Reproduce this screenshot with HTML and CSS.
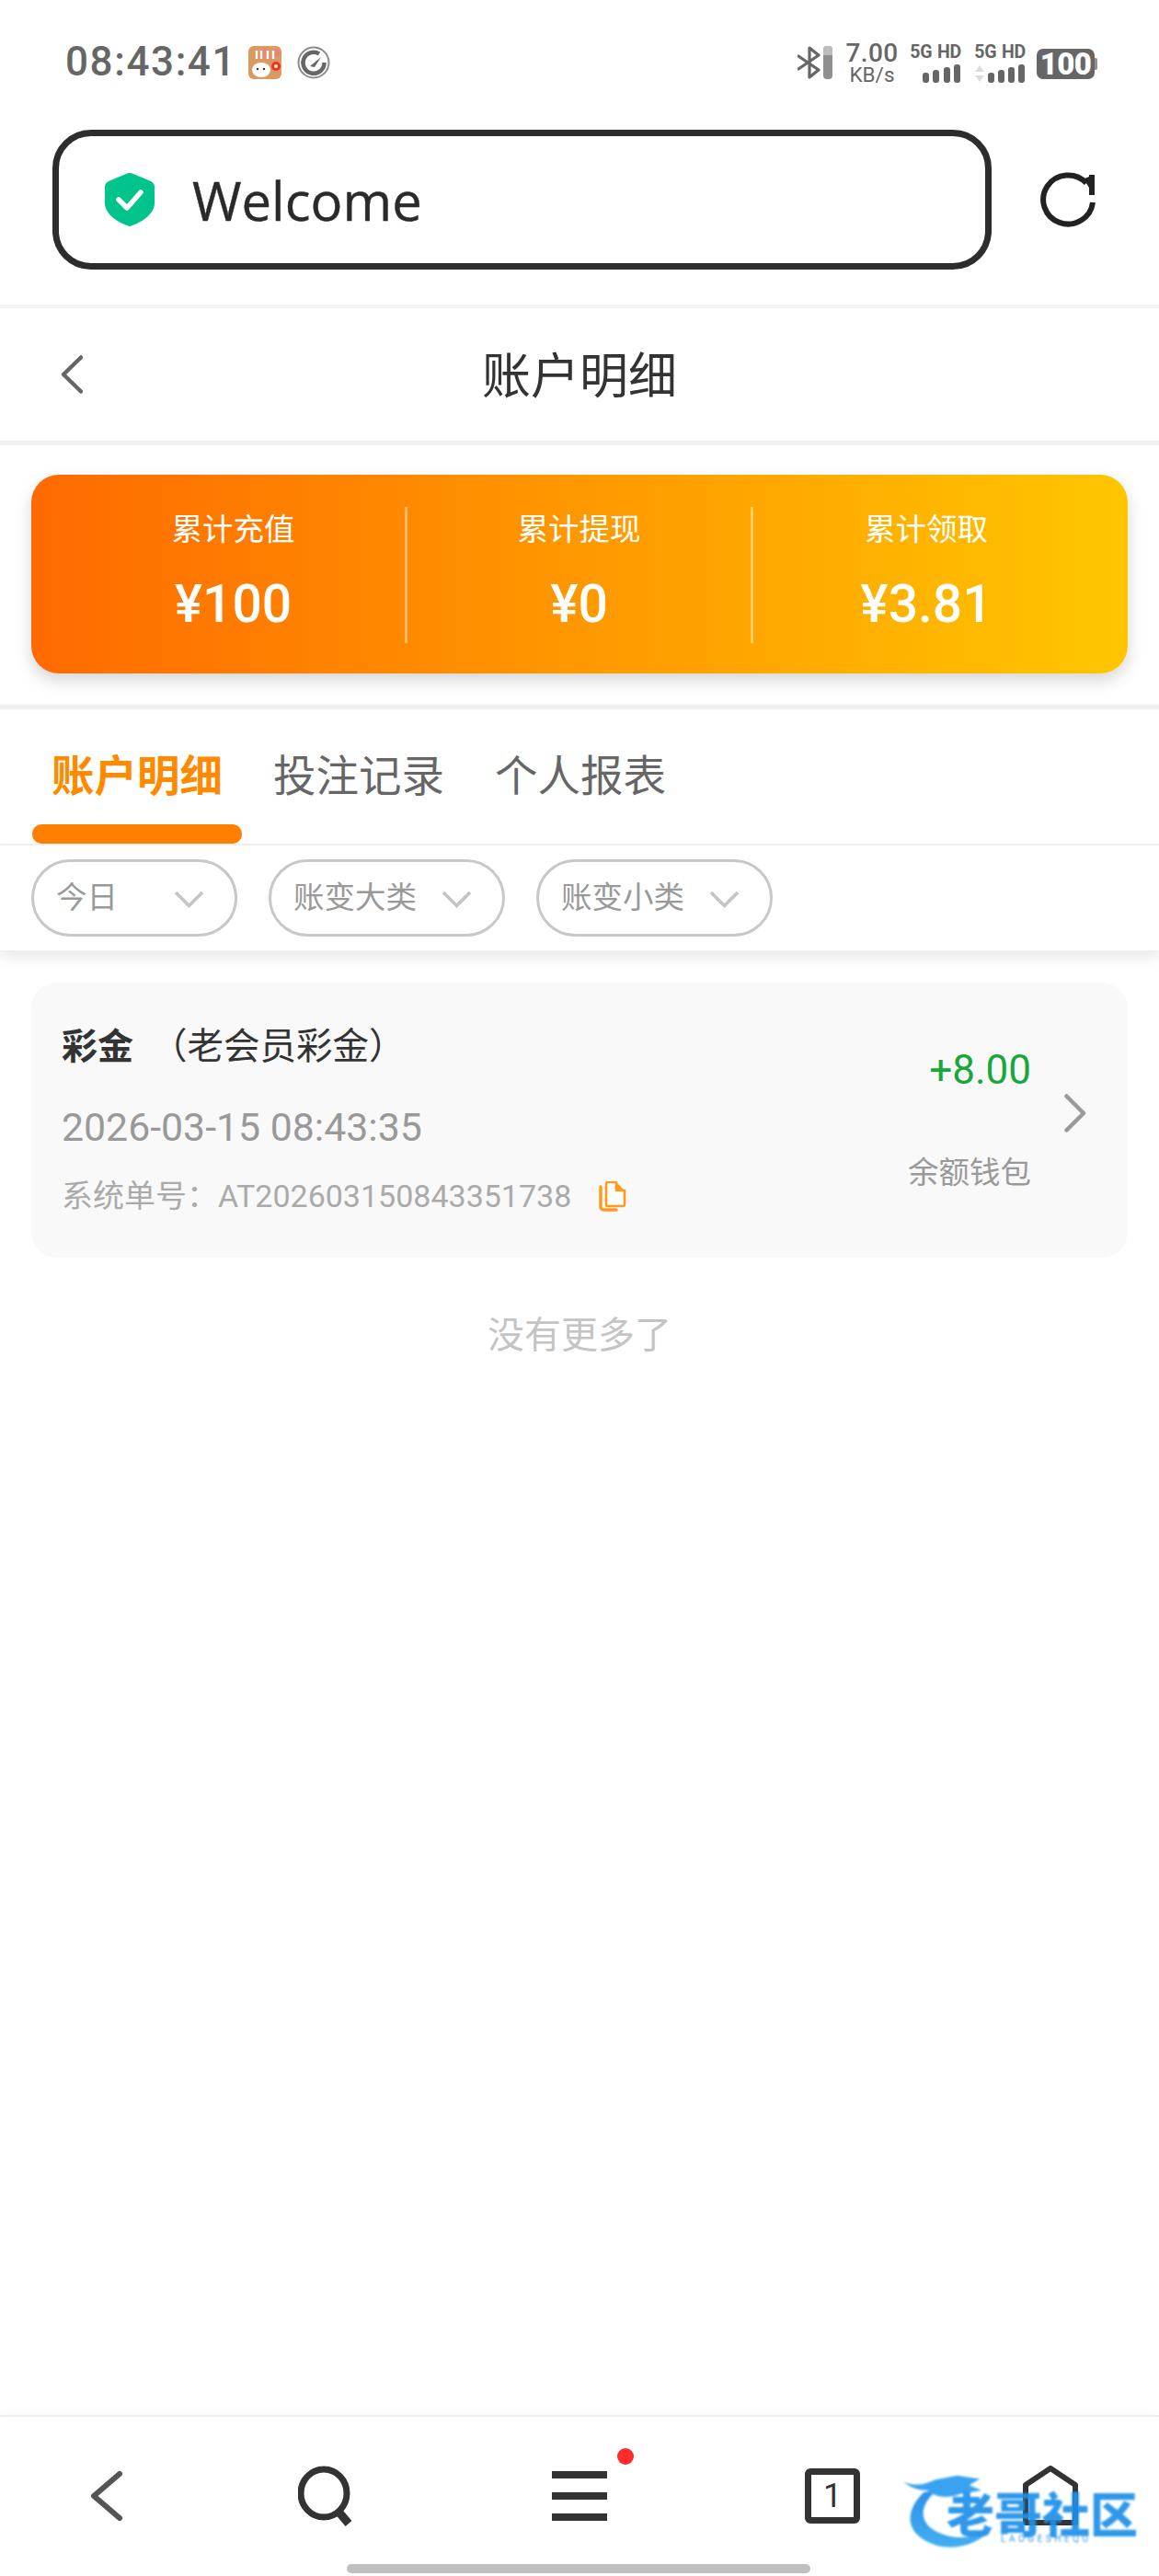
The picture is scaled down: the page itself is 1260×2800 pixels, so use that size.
FILE: index.html
```html
<!DOCTYPE html>
<html lang="zh-CN">
<head>
<meta charset="utf-8">
<title>账户明细</title>
<link rel="stylesheet" href="styles.css">
</head>
<body>
<div class="page">
  <div class="status">
    <span class="time">08:43:41</span>
    <svg class="st-icon st-jd" viewBox="0 0 36 36">
      <rect width="36" height="36" rx="6" fill="#dc9a63"/>
      <path d="M18 0L8 14h20zM30 0l-6 16 12-8z" fill="#ef7f7a" opacity=".6"/>
      <path d="M9 5v9M14 5v9M21 5v9M27 5v9" stroke="#fff" stroke-width="2.4"/>
      <ellipse cx="14" cy="26" rx="10" ry="8" fill="#fff"/>
      <circle cx="10" cy="25" r="1.2" fill="#333"/><circle cx="17" cy="25" r="1.2" fill="#333"/>
      <circle cx="30" cy="22" r="5" fill="#e8352a"/><circle cx="30" cy="22" r="2" fill="#fbe3b8"/>
    </svg>
    <svg class="st-icon st-gauge" viewBox="0 0 36 36" fill="none">
      <circle cx="18" cy="18" r="16.5" stroke="#8a8a8a" stroke-width="2"/>
      <path d="M24 8.500A11.500 11.500 0 1 0 29.500 18" stroke="#666" stroke-width="4.500"/>
      <path d="M14 22L26 12L19 23z" fill="#666"/>
    </svg>
    <div class="st-right">
      <svg class="st-bt" viewBox="0 0 38 36" fill="none">
        <path d="M1 11L23 26L13 34V2L23 10L1 25" stroke="#666" stroke-width="3.2" stroke-linejoin="round" stroke-linecap="round"/>
        <rect x="28" width="10" height="36" rx="4" fill="#8f8f8f"/>
        <path d="M28 4a4 4 0 0 1 4-4h2a4 4 0 0 1 4 4v6H28z" fill="#bdbdbd"/>
      </svg>
      <div class="st-speed"><span class="st-num">7.00</span><span class="st-unit">KB/s</span></div>
      <div class="st-sim">
        <span class="st-label">5G HD</span>
        <svg class="st-sig" viewBox="0 0 42 20"><rect y="9" width="7" height="11" rx="3" fill="#666"/><rect x="11" y="6" width="7" height="14" rx="3" fill="#666"/><rect x="23" y="3" width="7" height="17" rx="3" fill="#666"/><rect x="34" width="7" height="20" rx="3" fill="#666"/></svg>
      </div>
      <div class="st-sim">
        <span class="st-label">5G HD</span>
        <svg class="st-sig st-sig2" viewBox="0 0 56 20"><path d="M1 8L6 1l5 7zM1 12l5 7 5-7z" fill="#ddd"/><rect x="15" y="9" width="7" height="11" rx="3" fill="#666"/><rect x="26" y="6" width="7" height="14" rx="3" fill="#666"/><rect x="37" y="3" width="7" height="17" rx="3" fill="#666"/><rect x="48" width="7" height="20" rx="3" fill="#666"/></svg>
      </div>
      <div class="st-batt"><span class="st-batt-num">100</span></div>
    </div>
  </div>

  <div class="addr">
    <div class="addr-box">
      <svg class="shield" viewBox="0 0 54 58">
        <path d="M27 0Q29 0 31 1L50 9Q54 11 54 15V33C54 45 38 55 27 58C16 55 0 45 0 33V15Q0 11 4 9L23 1Q25 0 27 0Z" fill="#00c48c"/>
        <path d="M15 29L24 38L39 21" fill="none" stroke="#fff" stroke-width="5.5" stroke-linecap="round" stroke-linejoin="round"/>
      </svg>
      <span class="addr-text">Welcome</span>
    </div>
    <svg class="refresh" viewBox="0 0 60 60" fill="none">
      <path d="M57 33A27 26.500 0 1 1 50 12" stroke="#222" stroke-width="6"/>
      <path d="M53 3h6v22h-6z" fill="#222"/>
      <path d="M47 7.500L53 5v12z" fill="#222"/>
    </svg>
  </div>

  <div class="head">
    <svg class="head-back" viewBox="0 0 24 42" fill="none"><path d="M22 2.500L3 21l19 18.500" stroke="#666" stroke-width="4.500" stroke-linecap="round" stroke-linejoin="round"/></svg>
    <h1 class="head-title">账户明细</h1>
    <span></span>
  </div>

  <div class="summary">
    <div class="sum-card">
      <div class="sum-col"><span class="sum-label">累计充值</span><span class="sum-value">¥100</span></div>
      <div class="sum-col"><span class="sum-label">累计提现</span><span class="sum-value">¥0</span></div>
      <div class="sum-col"><span class="sum-label">累计领取</span><span class="sum-value">¥3.81</span></div>
    </div>
  </div>

  <div class="tabs">
    <div class="tab tab-on"><span class="tab-text">账户明细</span><span class="tab-bar"></span></div>
    <div class="tab"><span class="tab-text">投注记录</span></div>
    <div class="tab"><span class="tab-text">个人报表</span></div>
  </div>

  <div class="filters">
    <div class="pill pill-a"><span>今日</span><svg class="pill-arrow" viewBox="0 0 33 19" fill="none"><path d="M2 2l14.500 14.500L31 2" stroke="#c4c4c4" stroke-width="3.600"/></svg></div>
    <div class="pill pill-b"><span>账变大类</span><svg class="pill-arrow" viewBox="0 0 33 19" fill="none"><path d="M2 2l14.500 14.500L31 2" stroke="#c4c4c4" stroke-width="3.600"/></svg></div>
    <div class="pill pill-b"><span>账变小类</span><svg class="pill-arrow" viewBox="0 0 33 19" fill="none"><path d="M2 2l14.500 14.500L31 2" stroke="#c4c4c4" stroke-width="3.600"/></svg></div>
  </div>

  <div class="item">
    <div class="item-left">
      <div class="item-title"><b class="item-strong">彩金</b><span class="item-sub">（老会员彩金）</span></div>
      <div class="item-date">2026-03-15 08:43:35</div>
      <div class="item-sys">
        <span class="item-no">系统单号：AT202603150843351738</span>
        <svg class="copy" viewBox="0 0 31 33"><path d="M3 6v22a3 3 0 0 0 3 3h14" fill="none" stroke="#ff9a1f" stroke-width="3.400" stroke-linecap="round"/><path d="M9 3a2 2 0 0 1 2-2h9v9h9v15a2 2 0 0 1-2 2H11a2 2 0 0 1-2-2z" fill="#fff" stroke="#ff9a1f" stroke-width="2.600"/><path d="M19 0l11 11H19z" fill="#ff9a1f"/></svg>
      </div>
    </div>
    <div class="item-right">
      <div class="item-col"><span class="item-amount">+8.00</span><span class="item-wallet">余额钱包</span></div>
      <svg class="item-arrow" viewBox="0 0 24 42" fill="none"><path d="M2.500 2.500L21 21 2.500 39.500" stroke="#999" stroke-width="4.500" stroke-linecap="round" stroke-linejoin="round"/></svg>
    </div>
  </div>

  <div class="more">没有更多了</div>

  <div class="nav">
    <div class="nav-row">
      <div class="nav-slot nav-back"><svg class="nav-svg" viewBox="0 0 60 66" fill="none"><path d="M45 9L17 33l28 24" stroke="#555" stroke-width="6" stroke-linecap="round" stroke-linejoin="round"/></svg></div>
      <div class="nav-slot nav-search"><svg class="nav-svg" viewBox="0 0 60 66" fill="none"><ellipse cx="28" cy="30" rx="25" ry="26" stroke="#333" stroke-width="7"/><path d="M44 50l11 13" stroke="#333" stroke-width="9"/></svg></div>
      <div class="nav-slot nav-menu">
        <svg class="nav-svg" viewBox="0 0 60 66"><path d="M0 6h60v8H0zM0 29h60v8H0zM0 52h60v8H0z" fill="#333"/></svg>
        <span class="nav-dot"></span>
      </div>
      <div class="nav-slot nav-tabs"><span class="nav-count">1</span></div>
      <div class="nav-slot nav-home"><svg class="nav-svg" viewBox="0 0 60 66" fill="none"><path d="M3 62V21L30 3l27 18v41z" stroke="#333" stroke-width="6" stroke-linejoin="round"/></svg></div>
    </div>
    <div class="nav-ind"></div>
  </div>

  <div class="mark">
    <svg class="mark-dragon" viewBox="0 0 110 90" fill="none">
      <defs><linearGradient id="markfill" x1="0" y1="0" x2="0" y2="1"><stop offset="0" stop-color="#1c86e8"/><stop offset="1" stop-color="#33a9ef"/></linearGradient></defs>
      <path d="M24 22C4 40 -4 70 40 84C62 89 88 82 104 62C86 74 62 78 44 70C18 60 16 40 38 20z" fill="url(#markfill)"/>
      <path d="M0 10C14 16 26 13 36 8L62 3L88 7L76 14L90 20L66 24C52 30 36 28 28 20C18 20 8 17 0 10z" fill="#2a9cf0"/>
    </svg>
    <span class="mark-cn">老哥社区</span>
    <span class="mark-en">LAOGESHEQU</span>
  </div>
</div>
</body>
</html>
```

FILE: styles.css
```css
* { box-sizing: border-box; }
html, body { margin: 0; padding: 0; background: #fff; }
body { font-family: "Noto Sans CJK SC", "Noto Sans", sans-serif; }
.page { position: relative; width: 1260px; height: 2800px; overflow: hidden; display: flex; flex-direction: column; background: #fff; }

/* status bar */
.status { height: 139px; flex: none; display: flex; align-items: flex-start; padding: 45px 70px 0 71px; color: #666; font-family: Roboto, sans-serif; }
.time { font-size: 44px; line-height: 45px; font-weight: 500; letter-spacing: 1.6px; width: 199px; flex: none; }
.st-icon { width: 36px; height: 36px; flex: none; margin-top: 5px; }
.st-gauge { margin-left: 17px; }
.st-right { margin-left: auto; display: flex; align-items: flex-start; }
.st-bt { width: 38px; height: 36px; margin-top: 5px; flex: none; }
.st-speed { width: 54px; margin-left: 16px; display: flex; flex-direction: column; align-items: center; }
.st-num { font-size: 28px; line-height: 26px; font-weight: 500; letter-spacing: .4px; }
.st-unit { font-size: 22.500px; line-height: 21px; }
.st-sim { width: 58px; margin-left: 12px; display: flex; flex-direction: column; align-items: flex-end; }
.st-sim:first-of-type { margin-left: 15px; }
.st-label { font-size: 19.500px; line-height: 20px; font-weight: 700; white-space: nowrap; letter-spacing: -.2px; margin-top: 2px; word-spacing: 1px; }
.st-sig { width: 42px; height: 20px; margin-top: 3px; }
.st-sig2 { width: 56px; }
.st-batt { width: 63px; height: 33px; margin-left: 12px; margin-top: 8px; background: #666; border-radius: 7px; display: flex; align-items: center; justify-content: center; position: relative; }
.st-batt::after { content: ""; position: absolute; right: -3px; top: 10px; width: 3px; height: 13px; background: #8f8f8f; border-radius: 0 2px 2px 0; }
.st-batt-num { color: #fff; font-size: 33px; line-height: 33px; font-weight: 900; letter-spacing: -.6px; }

/* address bar */
.addr { height: 196px; flex: none; padding: 2px 70px 0 57px; display: flex; align-items: flex-start; border-bottom: 4px solid #f3f3f3; }
.addr-box { width: 1021px; height: 152px; border: 7px solid #2d2d2d; border-radius: 42px; display: flex; align-items: center; padding-left: 50px; flex: none; }
.shield { width: 54px; height: 58px; flex: none; }
.addr-text { margin: 2px 0 0 41px; font-family: "Open Sans", sans-serif; font-size: 58px; line-height: 70px; color: #2a2a2a; -webkit-text-stroke: .4px #2a2a2a; }
.refresh { width: 60px; height: 60px; margin: 46px 0 0 53px; flex: none; }

/* page head */
.head { height: 149px; flex: none; display: grid; grid-template-columns: 1fr auto 1fr; align-items: center; padding: 0 0 4px; border-bottom: 5px solid #f0f0f0; }
.head-back { width: 24px; height: 42px; margin: 4px 0 0 66px; }
.head-title { margin: 0; font-size: 53px; line-height: 70px; font-weight: 400; color: #333; }

/* summary */
.summary { height: 287px; flex: none; padding: 32px 34px 0; border-bottom: 5px solid #f0f0f0; }
.sum-card { height: 216px; padding: 35px 31px 35px 33px; display: grid; grid-template-columns: repeat(3, 1fr); border-radius: 30px; background: linear-gradient(90deg, #ff6a00, #ffc600); box-shadow: 0 8px 18px rgba(0, 0, 0, .16); }
.sum-col { height: 148px; display: flex; flex-direction: column; align-items: center; color: #fff; border-right: 3px solid rgba(255, 255, 255, .42); }
.sum-col:last-child { border-right: 0; }
.sum-label { font-size: 33.500px; line-height: 44px; }
.sum-value { margin-top: 27px; font-family: Roboto, sans-serif; font-size: 57px; line-height: 70px; font-weight: 500; }

/* tabs */
.tabs { height: 148px; flex: none; display: flex; align-items: flex-start; gap: 13px; padding-left: 35px; border-bottom: 2px solid #f0f0f0; }
.tab { display: flex; flex-direction: column; padding-top: 13px; }
.tab-text { font-size: 46.500px; line-height: 112px; padding: 0 21px; color: #666; }
.tab-on .tab-text { color: #ff8a00; font-weight: 700; }
.tab-bar { height: 21px; background: #ff8000; border-radius: 10px; }

/* filters */
.filters { height: 114px; flex: none; display: flex; gap: 34px; padding: 15px 0 0 34px; background: #fff; box-shadow: 0 8px 14px rgba(0, 0, 0, .09); position: relative; }
.pill { height: 84px; display: flex; align-items: center; padding: 0 0 7px 24px; border: 3px solid #c8c8c8; border-radius: 42px; font-size: 33.500px; color: #999; background: #fff; }
.pill-a { width: 224px; }
.pill-b { width: 257px; }
.pill-arrow { width: 33px; height: 19px; margin-left: auto; margin-right: 33px; margin-top: 9px; }

/* record */
.item { height: 299px; flex: none; margin: 35px 34px 0; padding: 45px 45px 0 33px; display: flex; justify-content: space-between; background: #f9f9f9; border-radius: 28px; }
.item-title { line-height: 48px; font-size: 39.500px; color: #333; white-space: nowrap; margin-top: -3px; }
.item-strong { font-weight: 700; font-size: 39px; }
.item-sub { font-weight: 400; margin-left: 19px; }
.item-date { margin-top: 41px; font-family: Roboto, sans-serif; font-size: 42.800px; line-height: 52px; color: #999; }
.item-sys { margin-top: 26px; display: flex; align-items: center; height: 46px; }
.item-no { font-family: Roboto, "Noto Sans CJK SC", sans-serif; font-size: 34px; line-height: 46px; color: #aaa; }
.copy { width: 31px; height: 33px; margin-left: 29px; flex: none; }
.item-right { display: flex; align-items: flex-start; }
.item-col { display: flex; flex-direction: column; align-items: flex-end; margin-top: 25px; }
.item-amount { font-family: Roboto, sans-serif; font-size: 44px; line-height: 50px; color: #17a73c; }
.item-wallet { margin-top: 61px; font-size: 33.500px; line-height: 46px; color: #999; }
.item-arrow { width: 24px; height: 42px; margin: 76px 0 0 36px; flex: none; }
.more { margin-top: 55px; text-align: center; font-size: 40px; line-height: 52px; color: #c4c4c4; }

/* bottom navigation */
.nav { margin-top: auto; height: 175px; flex: none; display: flex; flex-direction: column; border-top: 2px solid #eee; box-shadow: 0 -4px 8px rgba(0, 0, 0, .02); }
.nav-row { display: flex; padding-top: 53px; }
.nav-slot { width: 60px; height: 66px; position: relative; flex: none; }
.nav-svg { width: 60px; height: 66px; display: block; }
.nav-back { margin-left: 85px; }
.nav-search { margin-left: 179px; }
.nav-menu { margin-left: 216px; }
.nav-tabs { margin-left: 215px; height: 60px; margin-top: 3px; border: 7px solid #333; border-radius: 6px; display: flex; align-items: center; justify-content: center; }
.nav-count { font-family: Roboto, sans-serif; font-size: 36px; line-height: 40px; color: #333; }
.nav-home { margin-left: 177px; }
.nav-dot { position: absolute; left: 71px; top: -19px; width: 18px; height: 18px; border-radius: 50%; background: #ff2a2a; }
.nav-ind { width: 504px; height: 10px; margin: auto 0 3px 377px; border-radius: 5px; background: #c0c0c0; }

/* watermark overlay */
.mark { position: absolute; left: 979px; top: 2688px; width: 262px; height: 85px; color: #1e90e8; filter: blur(1.1px); opacity: .92; }
.mark-dragon { position: absolute; left: 0; top: 0; width: 110px; height: 85px; }
.mark-cn { position: absolute; left: 50px; top: 23px; font-size: 52px; line-height: 40px; font-weight: 900; white-space: nowrap; }
.mark-en { position: absolute; left: 109px; top: 66px; font-family: Roboto, sans-serif; font-size: 10px; line-height: 12px; letter-spacing: 3.500px; white-space: nowrap; }
```
